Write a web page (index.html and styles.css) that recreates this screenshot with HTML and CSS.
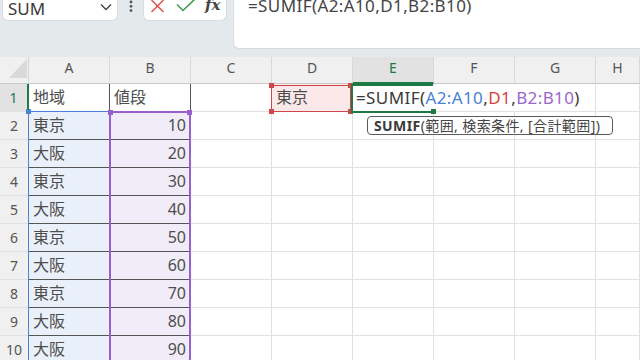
FILE: index.html
```html
<!DOCTYPE html>
<html lang="ja">
<head>
  <meta charset="UTF-8">
  <title>SUMIF</title>
  <link rel="stylesheet" href="styles.css">
</head>
<body>
  <div class="topbar">
    <div class="namebox">
      <span>SUM</span>
      <svg class="chev" width="12" height="8" viewBox="0 0 12 8"><path d="M1 1.5 L6 6.5 L11 1.5" stroke="#444" stroke-width="1.4" fill="none"/></svg>
    </div>
    <div class="dots">
      <svg width="4" height="13" viewBox="0 0 4 13"><circle cx="2" cy="2" r="1.4" fill="#555"/><circle cx="2" cy="6.3" r="1.4" fill="#555"/><circle cx="2" cy="10.6" r="1.4" fill="#555"/></svg>
    </div>
    <div class="fxbox">
      <svg class="cancel" width="15" height="13" viewBox="0 0 15 13"><path d="M1.5 0 L13.5 12 M13.5 0 L1.5 12" stroke="#e0524f" stroke-width="1.5" fill="none"/></svg>
      <svg class="enter" width="20" height="12" viewBox="0 0 20 12"><path d="M1 4.5 L7 10.5 L19 -1" stroke="#3f9d4e" stroke-width="1.6" fill="none"/></svg>
      <span class="fx">fx</span>
    </div>
    <div class="formulabar">=SUMIF(A2:A10,D1,B2:B10)</div>
  </div>

  <div class="sheet">
    <div class="corner"><svg width="20" height="22" viewBox="0 0 20 22"><polygon points="19,2 19,21 1,21" fill="#d9d9d9"/></svg></div>
    <div class="ch">A</div>
    <div class="ch">B</div>
    <div class="ch">C</div>
    <div class="ch">D</div>
    <div class="ch sel">E</div>
    <div class="ch">F</div>
    <div class="ch">G</div>
    <div class="ch">H</div>

    <div class="rh sel">1</div>
    <div class="cell t">地域</div>
    <div class="cell t">値段</div>
    <div class="cell"></div>
    <div class="cell rd">東京</div>
    <div class="cell formula nob">=SUMIF(<span class="ca">A2:A10</span>,<span class="cd">D1</span>,<span class="cb">B2:B10</span>)</div>
    <div class="cell nob"></div>
    <div class="cell"></div>
    <div class="cell"></div>

    <div class="rh">2</div><div class="cell t ra">東京</div><div class="cell t rb num">10</div><div class="cell"></div><div class="cell"></div><div class="cell"></div><div class="cell"></div><div class="cell"></div><div class="cell"></div>
    <div class="rh">3</div><div class="cell t ra">大阪</div><div class="cell t rb num">20</div><div class="cell"></div><div class="cell"></div><div class="cell"></div><div class="cell"></div><div class="cell"></div><div class="cell"></div>
    <div class="rh">4</div><div class="cell t ra">東京</div><div class="cell t rb num">30</div><div class="cell"></div><div class="cell"></div><div class="cell"></div><div class="cell"></div><div class="cell"></div><div class="cell"></div>
    <div class="rh">5</div><div class="cell t ra">大阪</div><div class="cell t rb num">40</div><div class="cell"></div><div class="cell"></div><div class="cell"></div><div class="cell"></div><div class="cell"></div><div class="cell"></div>
    <div class="rh">6</div><div class="cell t ra">東京</div><div class="cell t rb num">50</div><div class="cell"></div><div class="cell"></div><div class="cell"></div><div class="cell"></div><div class="cell"></div><div class="cell"></div>
    <div class="rh">7</div><div class="cell t ra">大阪</div><div class="cell t rb num">60</div><div class="cell"></div><div class="cell"></div><div class="cell"></div><div class="cell"></div><div class="cell"></div><div class="cell"></div>
    <div class="rh">8</div><div class="cell t ra">東京</div><div class="cell t rb num">70</div><div class="cell"></div><div class="cell"></div><div class="cell"></div><div class="cell"></div><div class="cell"></div><div class="cell"></div>
    <div class="rh">9</div><div class="cell t ra">大阪</div><div class="cell t rb num">80</div><div class="cell"></div><div class="cell"></div><div class="cell"></div><div class="cell"></div><div class="cell"></div><div class="cell"></div>
    <div class="rh">10</div><div class="cell t ra">大阪</div><div class="cell t rb num">90</div><div class="cell"></div><div class="cell"></div><div class="cell"></div><div class="cell"></div><div class="cell"></div><div class="cell"></div>

    <!-- range outlines drawn over the grid -->
    <div class="range range-a"><i class="h tl"></i></div>
    <div class="range range-b"><i class="h tl"></i><i class="h tr"></i></div>
    <div class="range range-d"><i class="h tl"></i><i class="h tr"></i><i class="h bl"></i><i class="h br"></i></div>
    <div class="active"><i class="h br"></i></div>

    <div class="tip"><b>SUMIF</b>(範囲, 検索条件, [合計範囲])</div>
  </div>
</body>
</html>
```

FILE: styles.css
```css
body {
  margin: 0;
  width: 640px;
  height: 360px;
  overflow: hidden;
  font-family: "Noto Sans", "Noto Sans CJK JP", sans-serif;
  background: #fff;
  color: #333;
}

/* formula bar */
.topbar {
  height: 57px;
  background: #e4eaeb;
  display: flex;
  align-items: flex-start;
  padding-left: 2px;
  box-sizing: border-box;
}
.namebox {
  width: 116px;
  height: 21px;
  background: #fff;
  border: 1px solid #d7dcdd;
  border-top: none;
  border-radius: 0 0 6px 6px;
  box-sizing: border-box;
  display: flex;
  justify-content: space-between;
  padding: 0 5px 0 5px;
  font-size: 17px;
  line-height: 17px;
  color: #3a3a3a;
}
.chev {
  margin-top: 3px;
}
.dots {
  width: 25px;
  display: flex;
  justify-content: center;
}
.fxbox {
  width: 84px;
  height: 21px;
  background: #fff;
  border: 1px solid #d7dcdd;
  border-top: none;
  border-radius: 0 0 6px 6px;
  box-sizing: border-box;
  display: flex;
  align-items: flex-start;
  padding-left: 6px;
}
.enter {
  margin-left: 11px;
}
.fx {
  margin-left: 9px;
  margin-top: -3px;
  font-family: "DejaVu Serif", serif;
  font-style: italic;
  font-weight: bold;
  font-size: 15px;
  line-height: 17px;
  color: #444;
}
.formulabar {
  flex: 1;
  margin-left: 6px;
  height: 49px;
  background: #fff;
  border: 1px solid #d7dcdd;
  border-top: none;
  border-right: none;
  border-radius: 0 0 0 6px;
  box-sizing: border-box;
  padding-left: 14px;
  font-size: 17px;
  letter-spacing: 0.4px;
  line-height: 11px;
  color: #444;
}

/* sheet grid */
.sheet {
  position: relative;
  display: grid;
  grid-template-columns: 29px repeat(7, 81px) 1fr;
  grid-template-rows: 27px;
  grid-auto-rows: 28px;
}
.corner {
  background: #f0f0f0;
  border-right: 1px solid #d4d4d4;
  border-bottom: 1px solid #c9c9c9;
  display: flex;
  justify-content: flex-end;
  box-sizing: border-box;
}
.ch {
  background: #f0f0f0;
  border-right: 1px solid #d9d9d9;
  border-bottom: 1px solid #c9c9c9;
  box-sizing: border-box;
  text-align: center;
  font-size: 14px;
  line-height: 21px;
  color: #555;
}
.ch.sel {
  background: #e2e2e2;
  color: #1d7a45;
  border-bottom: 2px solid #1d7a45;
}
.rh {
  background: #f0f0f0;
  border-right: 1px solid #c9c9c9;
  border-bottom: 1px solid #e0e0e0;
  box-sizing: border-box;
  text-align: center;
  font-size: 14px;
  line-height: 27px;
  color: #555;
}
.rh.sel {
  background: #e2e2e2;
  color: #1d7a45;
  border-right: 2px solid #1d7a45;
}
.cell {
  border-right: 1px solid #e1e1e1;
  border-bottom: 1px solid #e1e1e1;
  box-sizing: border-box;
  padding: 0 4px;
  font-size: 16px;
  line-height: 27px;
  white-space: nowrap;
  color: #4d4d4d;
}
.cell.t {
  border-color: #555;
}
.cell.nob {
  border-right-color: transparent;
}
.num {
  text-align: right;
  padding-right: 4px;
}
.ra {
  background: #eaf0f9;
}
.rb {
  background: #f1edf8;
}
.rd {
  background: #fbe9ea;
}
.formula {
  font-size: 17px;
  letter-spacing: 0.4px;
  padding-left: 3px;
  color: #3a3a3a;
  position: relative;
  z-index: 1;
}
.ca { color: #4a80d6; }
.cd { color: #d8423c; }
.cb { color: #9a67cc; }

/* coloured range outlines */
.range, .active {
  position: absolute;
  box-sizing: border-box;
  z-index: 2;
}
.range-a {
  left: 28px;
  top: 54px;
  width: 82px;
  height: 260px;
  border: 1px solid #4a80d6;
  border-right: none;
}
.range-b {
  left: 109px;
  top: 54px;
  width: 82px;
  height: 260px;
  border: 2px solid #9a5fcf;
}
.range-d {
  left: 271px;
  top: 28px;
  width: 80px;
  height: 27px;
  border: 1.5px solid #d0474a;
}
.active {
  left: 351px;
  top: 27px;
  width: 82px;
  height: 29px;
  border: 2px solid #1d7a45;
  border-right: none;
}
.h {
  position: absolute;
  width: 5px;
  height: 5px;
}
.range-a .h { background: #4a80d6; }
.range-b .h { background: #9a5fcf; }
.range-d .h { background: #d0474a; }
.active .h { background: #1d7a45; }
.tl { left: -3px; top: -3px; }
.tr { right: -3px; top: -3px; }
.bl { left: -3px; bottom: -3px; }
.br { right: -3px; bottom: -3px; }

/* function tooltip */
.tip {
  position: absolute;
  left: 367px;
  top: 59px;
  width: 246px;
  height: 19px;
  box-sizing: border-box;
  background: #fff;
  border: 1px solid #5a5a5a;
  border-radius: 4px;
  padding-left: 6px;
  font-size: 14px;
  letter-spacing: 0.4px;
  line-height: 17px;
  color: #444;
  white-space: nowrap;
  z-index: 3;
}
.tip b {
  font-weight: bold;
  color: #3a3a3a;
}
```
